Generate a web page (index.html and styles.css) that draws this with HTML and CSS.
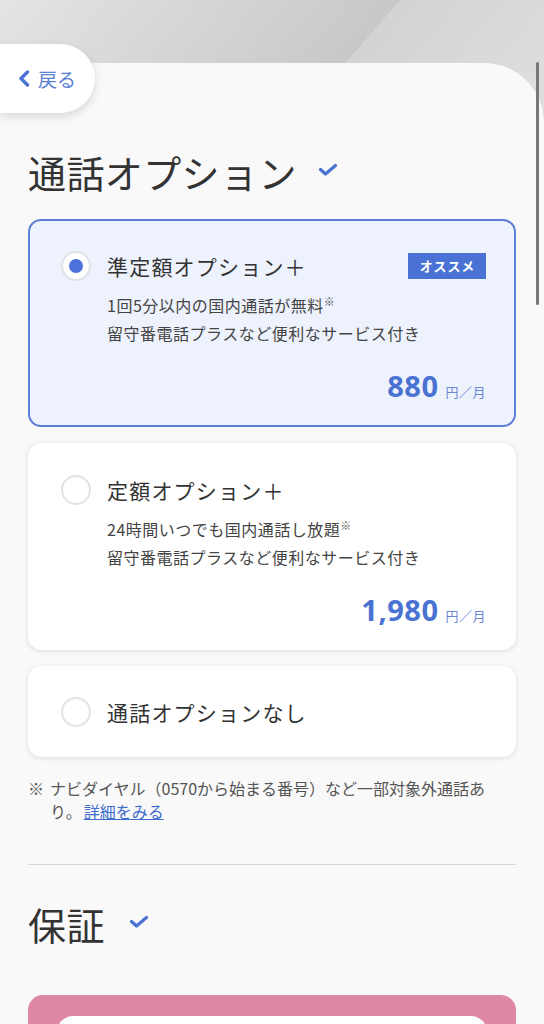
FILE: index.html
```html
<!DOCTYPE html>
<html lang="ja">
<head>
<meta charset="utf-8">
<title>通話オプション</title>
<link rel="stylesheet" href="styles.css">
</head>
<body>
<div class="page">
  <a class="back" href="#">
    <svg class="back-icon" width="12" height="17" viewBox="0 0 12 17"><polyline points="9.5,2 3,8.5 9.5,15" fill="none" stroke="#4a72d2" stroke-width="3.4" stroke-linecap="round" stroke-linejoin="round"/></svg>
    <span>戻る</span>
  </a>
  <div class="scrollbar"></div>
  <main class="sheet">
    <section class="section">
      <h2 class="section-title">通話オプション<svg class="check" width="20" height="14" viewBox="0 0 20 14"><polyline points="2.5,6.5 7.5,11 17.5,2.5" fill="none" stroke="#4a72d2" stroke-width="3.2" stroke-linecap="round" stroke-linejoin="round"/></svg></h2>
      <div class="options">
        <div class="option selected">
          <span class="radio"><span class="dot"></span></span>
          <div class="option-body">
            <div class="option-head"><span class="option-name">準定額オプション＋</span><span class="badge">オススメ</span></div>
            <p class="option-desc">1回5分以内の国内通話が無料<sup>※</sup><br>留守番電話プラスなど便利なサービス付き</p>
            <p class="price"><span class="amount">880</span><span class="unit">円／月</span></p>
          </div>
        </div>
        <div class="option">
          <span class="radio"></span>
          <div class="option-body">
            <div class="option-head"><span class="option-name">定額オプション＋</span></div>
            <p class="option-desc">24時間いつでも国内通話し放題<sup>※</sup><br>留守番電話プラスなど便利なサービス付き</p>
            <p class="price"><span class="amount">1,980</span><span class="unit">円／月</span></p>
          </div>
        </div>
        <div class="option compact">
          <span class="radio"></span>
          <div class="option-body">
            <div class="option-head"><span class="option-name">通話オプションなし</span></div>
          </div>
        </div>
      </div>
      <p class="note"><span class="mark">※</span><span class="note-text">ナビダイヤル（0570から始まる番号）など一部対象外通話あり。<a href="#">詳細をみる</a></span></p>
    </section>
    <hr class="divider">
    <section class="section">
      <h2 class="section-title title-2">保証<svg class="check" width="20" height="14" viewBox="0 0 20 14"><polyline points="2.5,6.5 7.5,11 17.5,2.5" fill="none" stroke="#4a72d2" stroke-width="3.2" stroke-linecap="round" stroke-linejoin="round"/></svg></h2>
      <div class="warranty"><div class="warranty-inner"></div></div>
    </section>
  </main>
</div>
</body>
</html>
```

FILE: styles.css
```css
* { box-sizing: border-box; }
html, body { margin: 0; padding: 0; overflow: hidden; }
body {
  width: 544px;
  height: 1024px;
  font-family: "Noto Sans CJK JP", "Noto Sans", sans-serif;
  color: #333;
  background: #f9f9f9;
}
.page {
  position: relative;
  padding-top: 63px;
  background-color: #f9f9f9;
  background-image: linear-gradient(131deg, #e4e4e4 0%, #c8c8c8 60.1%, #d3d3d3 60.1%, #e0e0e0 100%);
  background-size: 100% 140px;
  background-repeat: no-repeat;
}
.back {
  position: absolute;
  left: 0;
  top: 44px;
  width: 95px;
  height: 69px;
  display: flex;
  align-items: center;
  gap: 8px;
  padding-left: 18px;
  background: #fff;
  border-radius: 0 35px 35px 0;
  box-shadow: 0 4px 10px rgba(0, 0, 0, 0.13);
  color: #5b80d4;
  font-size: 19px;
  text-decoration: none;
  z-index: 2;
}
.back-icon { display: block; }
.scrollbar {
  position: absolute;
  right: 5px;
  top: 62px;
  width: 3px;
  height: 243px;
  background: #787878;
  border-radius: 2px;
  z-index: 2;
}
.sheet {
  background: #f9f9f9;
  border-top-right-radius: 60px;
  padding: 83px 28px 0;
  min-height: 1100px;
}
.section-title {
  margin: 0;
  display: flex;
  align-items: center;
  gap: 21px;
  font-size: 38px;
  line-height: 52px;
  font-weight: 400;
  letter-spacing: 0.4px;
  color: #333;
}
.check { display: block; margin-top: -4px; }
.options {
  margin-top: 21px;
  display: flex;
  flex-direction: column;
  gap: 16px;
}
.option {
  display: grid;
  grid-template-columns: 30px 1fr;
  column-gap: 16px;
  padding: 30px 29px 15px 32px;
  background: #fff;
  border: 1px solid #fff;
  border-radius: 13px;
  box-shadow: 0 1px 5px rgba(0, 0, 0, 0.12);
}
.option.selected {
  padding: 29px 28px 15px 31px;
  background: #edf2fc;
  border: 2px solid #5b7fd6;
  box-shadow: none;
}
.option.compact { padding-top: 29px; padding-bottom: 28px; }
.radio {
  width: 30px;
  height: 30px;
  margin-top: 1px;
  border-radius: 50%;
  background: #fff;
  border: 2px solid #dfe2e7;
  display: flex;
  align-items: center;
  justify-content: center;
}
.dot {
  width: 14px;
  height: 14px;
  border-radius: 50%;
  background: #4a72d8;
}
.option-head {
  display: flex;
  align-items: center;
  justify-content: space-between;
  height: 32px;
}
.option-name {
  font-size: 21px;
  line-height: 32px;
  letter-spacing: 1.2px;
  color: #333;
}
.badge {
  background: #4a72d4;
  color: #fff;
  font-size: 13px;
  font-weight: 700;
  letter-spacing: 0.8px;
  line-height: 26px;
  height: 26px;
  padding: 0 11px 0 12px;
}
.option-desc {
  margin: 9px 0 0;
  font-size: 16px;
  line-height: 28px;
  letter-spacing: 0.5px;
  color: #444;
}
.option-desc sup {
  font-size: 11px;
  line-height: 0;
  vertical-align: 6px;
  color: #555;
}
.price {
  margin: 21px 0 0;
  display: flex;
  justify-content: flex-end;
  align-items: baseline;
  gap: 7px;
  line-height: 36px;
  color: #4a72d2;
}
.amount {
  font-family: "Noto Sans", "Noto Sans CJK JP", sans-serif;
  font-size: 29px;
  font-weight: 700;
  letter-spacing: 0.5px;
}
.unit {
  font-size: 13px;
  color: #6a88d2;
  letter-spacing: 0.5px;
}
.note {
  margin: 20px 0 0;
  display: flex;
  font-size: 16px;
  line-height: 23px;
  letter-spacing: 0;
  color: #555;
}
.mark { flex: 0 0 22px; }
.note-text a { color: #3f6ccf; text-decoration: underline; margin-left: 2px; }
.divider {
  margin: 41px 0 0;
  border: 0;
  border-top: 1px solid #d8d8d8;
  height: 0;
}
.title-2 { margin-top: 33px; gap: 24px; }
.warranty {
  margin-top: 45px;
  background: #df88a3;
  border-radius: 15px;
  padding: 21px 29px 0 29px;
  height: 200px;
}
.warranty-inner {
  background: #fff;
  border-radius: 16px;
  height: 160px;
}
```
